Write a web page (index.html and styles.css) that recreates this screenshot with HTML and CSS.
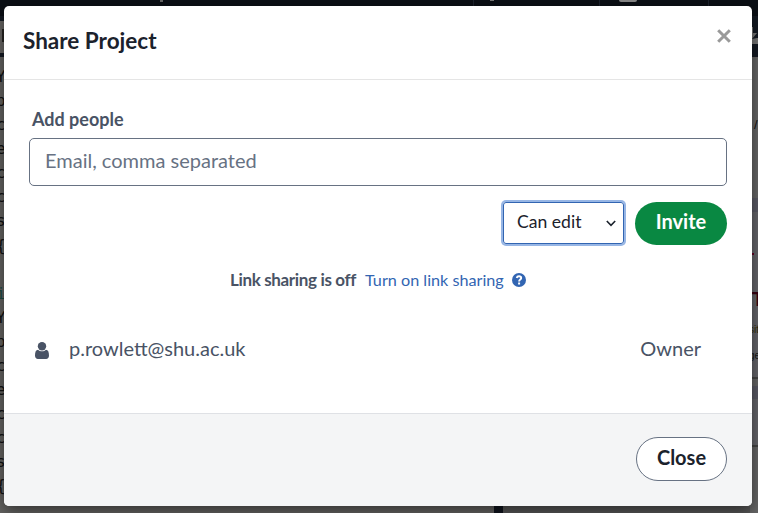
FILE: index.html
```
<!DOCTYPE html>
<html lang="en">
<head>
<meta charset="utf-8">
<title>Share Project</title>
<link rel="stylesheet" href="styles.css">
</head>
<body>
<div class="backdrop" aria-hidden="true">
  <div class="topbar">
    <i class="mark mark-a"></i><i class="mark mark-b"></i><i class="mark mark-c"></i><i class="mark mark-d"></i><i class="mark mark-e"></i><i class="mark mark-f"></i>
  </div>
  <div class="toolbar"><span class="tab"></span>
    <svg class="download" width="6" height="18" viewBox="0 0 6 18"><path d="M0 0h1v6h4L0 12zM0 12l5-1h1v6H0z" fill="#777"/></svg>
  </div>
  <div class="panes">
    <pre class="code">Y
p
c
e
c
c
s
{

<span class="cmd">i</span>
Y
p
c
e
c
c
s
{</pre>
    <div class="divider"></div>
    <div class="preview"></div>
    <div class="page">
      <div class="page-gap"><span class="slash">/</span></div>
      <div class="band"></div>
      <div class="page-body">
        <i class="dash"></i>
        <b class="heading">.T</b>
        <span class="snip olive">sit</span>
        <span class="snip">ge</span>
      </div>
      <div class="page-rule"></div>
      <div class="band second"></div>
      <div class="page-box"></div>
    </div>
  </div>
</div>
<div class="modal" role="dialog">
  <header class="modal-header">
    <h1>Share Project</h1>
    <button class="dismiss" aria-label="Close dialog"><svg width="14" height="14" viewBox="0 0 14 14"><path d="M1.200 1.200l11.600 11.600M12.800 1.200L1.200 12.800" stroke="#999" stroke-width="3"/></svg></button>
  </header>
  <main class="modal-body">
    <div class="label">Add people</div>
    <div class="field">Email, comma separated</div>
    <div class="actions">
      <div class="select"><span>Can edit</span><svg width="10" height="7" viewBox="0 0 10 7"><path d="M.8 1l4.2 4.3L9.2 1" fill="none" stroke="#1b222c" stroke-width="1.6"/></svg></div>
      <button class="invite">Invite</button>
    </div>
    <div class="link-row">
      <strong>Link sharing is off</strong>
      <a class="turn-on">Turn on link sharing</a>
      <svg class="help" width="14" height="14" viewBox="0 0 14 14"><circle cx="7" cy="7" r="7" fill="#3265b2"/><path d="M4.7 5C5 3.8 5.9 3.3 7 3.3c1.300 0 2.200.7 2.200 1.800C9.200 6.600 7.100 6.600 7.100 8.500" fill="none" stroke="#fff" stroke-width="1.900"/><path d="M6.100 9.500h2v1.900h-2z" fill="#fff"/></svg>
    </div>
    <div class="member">
      <svg width="14" height="17" viewBox="0 0 14 17"><circle cx="7" cy="4.200" r="4.200" fill="#495365"/><path d="M3.100 7.700C4.200 8.700 5.500 9.200 7 9.200s2.800-.5 3.900-1.500C13.100 7.900 14 9.900 14 13.500c0 2-1.200 3.500-2.900 3.500H2.900C1.200 17 0 15.500 0 13.500 0 9.900.9 7.900 3.100 7.700z" fill="#495365"/></svg>
      <span class="email">p.rowlett@shu.ac.uk</span>
      <span class="role">Owner</span>
    </div>
  </main>
  <footer class="modal-footer"><button class="close">Close</button></footer>
</div>
</body>
</html>
```
FILE: styles.css
```
* { box-sizing: border-box; }
body { margin: 0; width: 758px; height: 513px; overflow: hidden; position: relative; font-family: Lato, sans-serif; color: #495365; background: #656462; }
h1 { margin: 0; }
button { font-family: inherit; padding: 0; border: 0; }

.backdrop { height: 513px; display: flex; flex-direction: column; }
.topbar { height: 16px; background: #0b0f15; position: relative; }
.mark { position: absolute; top: 0; }
.mark-a { left: 160px; width: 3px; height: 2px; background: #666; }
.mark-b { left: 619px; width: 18px; height: 2px; background: #888; border-radius: 0 0 3px 3px; }
.mark-c { left: 599px; width: 1px; height: 6px; background: #1d232e; }
.mark-d { left: 708px; width: 1px; height: 6px; background: #1d232e; }
.mark-e { left: 490px; width: 4px; height: 1px; background: #777; }
.mark-f { left: 473px; width: 1px; height: 6px; background: #1d232e; }
.toolbar { height: 41px; background: #141a23; display: flex; justify-content: space-between; padding-top: 5px; }
.tab { width: 4px; height: 32px; background: linear-gradient(#272523, #272523) 2px 8px / 2px 13px no-repeat #696765; }
.download { margin-top: 6px; }
.panes { flex: 1; display: flex; min-height: 0; }
.code { margin: 0 0 0 -4px; width: 498px; height: 456px; padding-top: 8px; overflow: hidden; font: 16px/24.080px "DejaVu Sans Mono", monospace; color: #111; background: #656462; }
.cmd { color: #1c4b42; }
.divider { width: 9px; background: #10151d; }
.preview { width: 247px; background: #575757; }
.page { flex: 1; width: 8px; overflow: hidden; background: #666; white-space: nowrap; }
.page-gap { height: 141px; padding-top: 59px; font: 13px/18px "Liberation Sans", sans-serif; color: #111; }
.slash { padding-left: 4px; }
.band { height: 14px; background: #5a5a65; }
.page-body { height: 165px; display: flex; flex-direction: column; background: #65656a; }
.dash { width: 4px; height: 2px; margin-top: 41px; background: #620021; }
.heading { margin-top: 32px; font: bold 21px/24px "Liberation Sans", sans-serif; color: #380011; text-indent: -4px; }
.snip { font: 10px/26px "Liberation Sans", sans-serif; color: #151515; text-indent: -1px; }
.olive { color: #302b08; margin-top: 6px; }
.page-rule { height: 9px; border-top: 2px solid #444; }
.second { height: 13px; }
.page-box { height: 48px; border-bottom: 2px solid #444; background: #65656a; }

.modal { position: absolute; left: 4px; top: 6px; width: 748px; height: 500px; border-radius: 5px; overflow: hidden; background: #fff; box-shadow: 0 5px 15px rgba(0,0,0,.5); display: flex; flex-direction: column; }
.modal-header { height: 74px; flex: none; border-bottom: 1px solid #e5e5e5; display: flex; justify-content: space-between; padding: 18px 21px 0 19px; }
h1 { font-size: 22.500px; line-height: 34px; font-weight: 700; color: #1b222c; }
.dismiss { width: 14px; height: 14px; background: none; margin-top: 5px; }
.dismiss svg { display: block; }
.modal-body { height: 333px; flex: none; padding: 26px 25px 0; }
.label { height: 32px; font-size: 18px; line-height: 26px; font-weight: 700; padding-left: 3px; }
.field { height: 48px; border: 1px solid #677283; border-radius: 5px; padding-left: 15px; font-size: 20px; line-height: 42px; color: #677283; }
.actions { display: flex; justify-content: flex-end; align-items: flex-start; gap: 11px; height: 43px; margin-top: 16px; }
.select { width: 121px; height: 42px; border: 1px solid #3265b2; border-radius: 3px; box-shadow: 0 0 0 2px #97b6e5; display: flex; align-items: center; justify-content: space-between; padding: 0 7px 4px 13px; font-size: 17.600px; color: #1b222c; }
.select svg { margin-top: 5px; }
.invite { width: 92px; height: 43px; padding-bottom: 5px; border-radius: 22px; background: #098842; color: #fff; font-size: 20px; line-height: 37px; font-weight: 700; }
.link-row { display: flex; align-items: center; height: 24px; margin-top: 22px; padding-left: 201px; font-size: 16.200px; white-space: nowrap; }
.link-row strong { width: 126px; font-size: 17px; letter-spacing: -.35px; }
.turn-on { color: #3265b2; margin-left: 9px; }
.help { margin: 2px 0 0 8px; }
.member { display: flex; align-items: center; height: 30px; margin-top: 42px; padding: 0 26px 0 6px; font-size: 20px; }
.email { margin-left: 20px; }
.role { margin-left: auto; }
.member svg { margin-top: 4px; }
.modal-footer { flex: 1; border-top: 1px solid #dfe1e5; background: #f4f5f6; display: flex; justify-content: flex-end; padding: 23px 25px 0; }
.close { width: 91px; height: 44px; padding-bottom: 5px; border: 1px solid #677283; border-radius: 22px; background: #fff; color: #1b222c; font-size: 20px; line-height: 36px; font-weight: 700; }
```
